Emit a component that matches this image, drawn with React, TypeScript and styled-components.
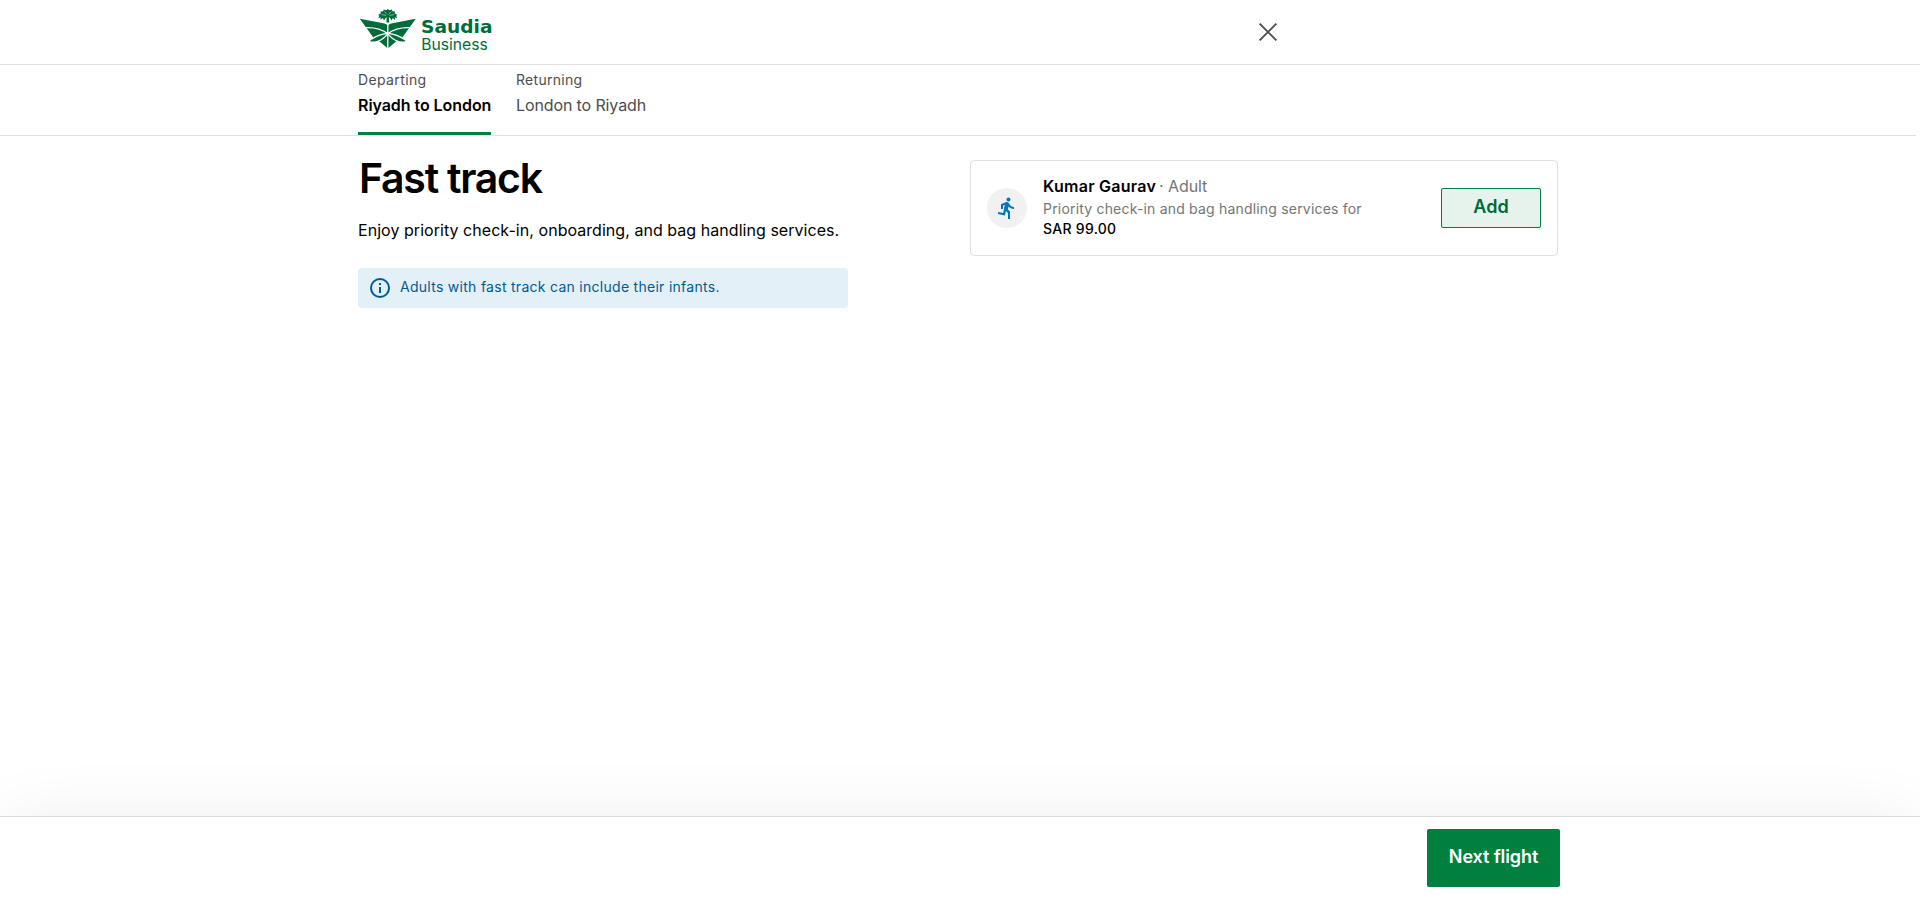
import React from "react";
import styled, { createGlobalStyle } from "styled-components";

const Global = createGlobalStyle`
  * { box-sizing: border-box; }
  body { margin: 0; background: #fff; color: #000; font-family: Inter, "Open Sans", sans-serif; }
  h1, p { margin: 0; }
  button { font-family: inherit; padding: 0; }
`;
const Page = styled.div`
  display: flex;
  flex-direction: column;
  height: 901px;
  overflow: hidden;
`;
const Header = styled.header`
  display: flex;
  justify-content: space-between;
  height: 65px;
  padding: 0 642px 0 358px;
  border-bottom: 1px solid #e1e1e1;
`;
const Logo = styled.svg`
  display: block;
  width: 140px;
  height: 60px;
`;
const CloseButton = styled.button`
  display: flex;
  align-items: center;
  justify-content: center;
  width: 20px;
  height: 64px;
  border: 0;
  background: none;
`;
const Tabs = styled.nav`
  display: flex;
  gap: 25px;
  height: 71px;
  margin-right: 4px;
  padding-left: 358px;
  border-bottom: 1px solid #e1e1e1;
`;
const Tab = styled.div<{ $active?: boolean; $width: number }>`
  display: flex;
  flex-direction: column;
  width: ${(p) => p.$width}px;
  padding-top: 5px;
  border-bottom: 3px solid ${(p) => (p.$active ? "#00803e" : "transparent")};
`;
const Text = styled.span<{ $size: number; $line: number; $color?: string; $weight?: number; $track?: number }>`
  display: block;
  white-space: nowrap;
  font-size: ${(p) => p.$size}px;
  line-height: ${(p) => p.$line}px;
  color: ${(p) => p.$color ?? "#000"};
  font-weight: ${(p) => p.$weight ?? 400};
  letter-spacing: ${(p) => p.$track ?? 0}px;
`;
const Main = styled.main`
  display: flex;
  justify-content: space-between;
  align-items: flex-start;
  flex: 1;
  padding: 24px 362px 0 358px;
`;
const Intro = styled.section`
  width: 490px;
`;
const Title = styled.h1`
  padding-left: 1px;
  font-size: 41px;
  line-height: 36px;
  font-weight: 600;
  letter-spacing: -1.25px;
  white-space: nowrap;
`;
const Lead = styled.div`
  margin-top: 22px;
`;
const Notice = styled.div`
  display: flex;
  align-items: center;
  gap: 10px;
  height: 40px;
  margin-top: 26px;
  padding: 0 12px;
  border-radius: 4px;
  background: #e4f0f8;
`;
const NoticeText = styled.div`
  padding-bottom: 2px;
`;
const Card = styled.section`
  display: flex;
  align-items: center;
  width: 588px;
  height: 96px;
  padding: 0 16px;
  border: 1px solid #e1e1e1;
  border-radius: 4px;
`;
const Avatar = styled.div`
  display: flex;
  align-items: center;
  justify-content: center;
  width: 40px;
  height: 40px;
  border-radius: 50%;
  background: #f1f1f1;
`;
const Details = styled.div`
  flex: 1;
  margin-left: 16px;
  padding-bottom: 3px;
`;
const NameRow = styled.div`
  display: flex;
  gap: 3px;
`;
const AddButton = styled.button`
  width: 100px;
  height: 40px;
  padding-bottom: 4px;
  border: 1px solid #00803e;
  border-radius: 2px;
  background: #e6f2ec;
  color: #006937;
  font-size: 18px;
  font-weight: 600;
`;
const Footer = styled.footer`
  display: flex;
  justify-content: flex-end;
  height: 85px;
  padding: 12px 360px 0 0;
  border-top: 1px solid #dcdcdc;
  background: #fff;
  box-shadow: 0 0 70px -6px rgba(0, 0, 0, 0.08);
`;
const NextButton = styled.button`
  width: 133px;
  height: 58px;
  padding-bottom: 4px;
  border: 0;
  border-radius: 2px;
  background: #00803e;
  color: #fff;
  font-size: 18px;
  font-weight: 600;
  letter-spacing: -0.1px;
`;

const SaudiaLogo = () => (
  <Logo viewBox="358 0 140 60" aria-label="Saudia Business">
    <path
      fill="#006c3a"
      d="M359.800 18.800 L384.500 23.600 Q387 24.300 387.800 26 Q388.600 24.300 391.100 23.600 L415.800 18.800 L402.300 37.600 L405.600 41.300 Q400.500 42 397.200 40.600 L387.800 48.600 L378.400 40.600 Q375.100 42 370 41.300 L373.300 37.600Z"
    />
    <g fill="none" stroke="#fff" strokeWidth="1.3">
      <path d="M387.800 24.500V49M366 27.700Q379 27.200 387.800 33.600Q396.600 27.200 409.600 27.700" />
      <path d="M371.500 39.300Q378 34.300 387.800 33.300Q397.600 34.300 404.100 39.300" />
      <path d="M377.600 41.500Q384.200 38.600 387.800 33.600Q391.400 38.600 398 41.500" />
    </g>
    <path
      fill="#006c3a"
      d="M387.800 9L389.300 10.300L392 9.500L392.300 11.200L395 11.600L394.700 13.300L397.400 15L396.200 15.800L397.300 18.400L394.800 17.200L395.200 20L392.700 18L391.700 20.500L389.800 17.700L388.900 17.300L389.200 22.400H386.400L386.700 17.300L385.800 17.700L383.900 20.500L382.900 18L380.400 20L380.800 17.200L378.300 18.400L379.400 15.800L378.200 15L380.900 13.300L380.600 11.600L383.300 11.200L383.600 9.500L386.300 10.300Z"
    />
    <path fill="none" stroke="#fff" strokeWidth="0.5" d="M387 14.500L384.500 11.500M388.600 14.500L391.100 11.500M386 15.500L381.500 14.500M389.600 15.500L394.100 14.500" />
    <text x="421" y="33.2" fill="#006c3a" fontFamily="DejaVu Sans, sans-serif" fontSize="17.5" fontWeight="700" textLength="71.5" lengthAdjust="spacingAndGlyphs">Saudia</text>
    <text x="421.3" y="49.5" fill="#006c3a" fontFamily="Inter, sans-serif" fontSize="15.5" textLength="66.5" lengthAdjust="spacingAndGlyphs">Business</text>
  </Logo>
);

const RunnerIcon = () => (
  <svg width="24" height="24" viewBox="0 0 24 24" fill="#0077bd">
    <path d="M13.490 5.480c1.100 0 2-.9 2-2s-.9-2-2-2-2 .9-2 2 .9 2 2 2zm-3.600 13.900l1-4.400 2.100 2v6h2v-7.500l-2.100-2 .6-3c1.300 1.500 3.300 2.500 5.500 2.500v-2c-1.900 0-3.500-1-4.300-2.400l-1-1.600c-.4-.6-1-1-1.700-1-.3 0-.5.1-.8.1l-5.200 2.200v4.700h2v-3.400l1.800-.7-1.600 8.100-4.900-1-.4 2 7 1.400z" />
  </svg>
);

export default function App() {
  return (
    <Page>
      <Global />
      <Header>
        <SaudiaLogo />
        <CloseButton aria-label="Close">
          <svg width="20" height="20" viewBox="0 0 20 20" fill="none" stroke="#4d4d4d" strokeWidth="1.9">
            <path d="M1.600 1.600 18.400 18.400M18.400 1.600 1.600 18.400" />
          </svg>
        </CloseButton>
      </Header>
      <Tabs>
        <Tab $active $width={133}>
          <Text $size={14} $line={20} $color="#4d4d4d" $track={0.38}>Departing</Text>
          <Text $size={16} $line={30} $weight={600} $track={-0.06}>Riyadh to London</Text>
        </Tab>
        <Tab $width={131}>
          <Text $size={14} $line={20} $color="#4d4d4d" $track={0.28}>Returning</Text>
          <Text $size={16} $line={30} $color="#4d4d4d" $track={-0.12}>London to Riyadh</Text>
        </Tab>
      </Tabs>
      <Main>
        <Intro>
          <Title>Fast track</Title>
          <Lead>
            <Text $size={16} $line={24} $track={0.045}>Enjoy priority check-in, onboarding, and bag handling services.</Text>
          </Lead>
          <Notice>
            <svg width="20" height="20" viewBox="0 0 20 20" fill="none" stroke="#005b92" strokeWidth="2">
              <circle cx="10" cy="10" r="9" />
              <path d="M10 9v6M10 5v2" />
            </svg>
            <NoticeText>
              <Text $size={14} $line={20} $color="#005b92" $track={0.28}>Adults with fast track can include their infants.</Text>
            </NoticeText>
          </Notice>
        </Intro>
        <Card>
          <Avatar><RunnerIcon /></Avatar>
          <Details>
            <NameRow>
              <Text $size={16} $line={24} $weight={600} $track={0.26}>Kumar Gaurav</Text>
              <Text $size={16} $line={24} $color="#757575" $track={-0.1}>· Adult</Text>
            </NameRow>
            <Text $size={14} $line={21} $color="#757575" $track={0.19}>Priority check-in and bag handling services for</Text>
            <Text $size={14} $line={20} $weight={500} $track={0.28}>SAR 99.00</Text>
          </Details>
          <AddButton>Add</AddButton>
        </Card>
      </Main>
      <Footer>
        <NextButton>Next flight</NextButton>
      </Footer>
    </Page>
  );
}
